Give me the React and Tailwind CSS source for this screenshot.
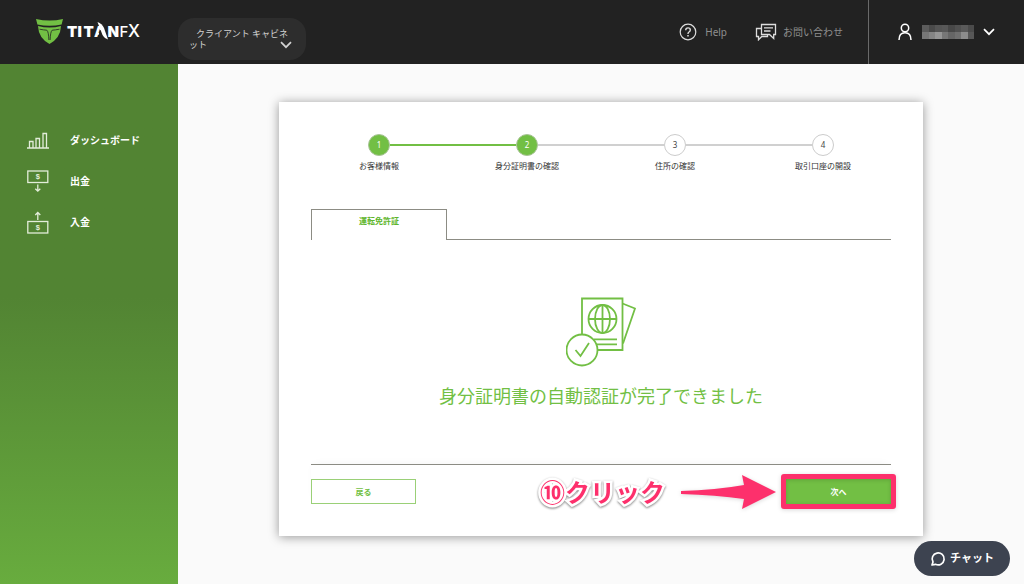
import React from "react";

function Logo() {
  return (
    <svg viewBox="0 0 108 28" className="h-7 w-27" role="img" aria-label="TITANFX">
      <path d="M0 1 Q13.500 4 27 1 L25.600 6.500 Q13.500 9 1.400 6.500 Z" fill="#72bf44" />
      <path d="M2 8 Q13.500 11 25 8 Q24.500 20 13.500 26 Q2.500 20 2 8 Z" fill="#72bf44" />
      <path d="M3.500 11.200 Q8 12 10.800 12.200 Q12.600 13.500 12.900 22 M23.500 11.200 Q19 12 16.200 12.200 Q14.400 13.500 14.100 22" fill="none" stroke="#222" strokeWidth="0.8" />
      <g fill="#fff" fontFamily="Inter, 'Liberation Sans', sans-serif" fontSize="15">
        <text x="31" y="18.500" fontWeight="900">T</text>
        <text x="41.500" y="18.500" fontWeight="900">I</text>
        <text x="47.500" y="18.500" fontWeight="900">T</text>
        <text x="58" y="18.500" fontWeight="800">A</text>
        <text x="71.500" y="18.500" fontWeight="900">N</text>
        <text x="83.500" y="18.500" fontWeight="500">F</text>
        <text x="92" y="18.500" fontWeight="500" fontSize="17">X</text>
      </g>
      <path d="M62 19 L64 12 L66 12 L68 19 L72 19 L72 20 L62 20 Z" fill="#222" />
      <path d="M61.500 4 Q66 5.500 68 10 L72 21.500 Q68 20 66.500 17 Z" fill="#fff" />
    </svg>
  );
}

function Chevron({ className }) {
  return (
    <svg viewBox="0 0 12 8" className={className} fill="none" stroke="currentColor" strokeWidth="1.7" aria-hidden="true">
      <path d="M1 1.200 L6 6.200 L11 1.200" />
    </svg>
  );
}

const mosaic = [
  "bg-[#5c5c5c]", "bg-[#4a4a4a]", "bg-[#555555]", "bg-[#585858]", "bg-[#484848]", "bg-[#515151]", "bg-[#5a5a5a]", "bg-[#4b4b4b]",
  "bg-[#777777]", "bg-[#858585]", "bg-[#969696]", "bg-[#777777]", "bg-[#666666]", "bg-[#707070]", "bg-[#8c8c8c]", "bg-[#575757]",
];

function Header() {
  return (
    <header className="flex h-16 items-stretch bg-[#222222] text-white">
      <div className="flex w-[178px] shrink-0 items-start pt-[18px] pl-9">
        <a href="#home"><Logo /></a>
      </div>
      <button type="button" className="relative mt-[18px] h-[42px] w-32 shrink-0 rounded-2xl bg-[#2d2d2d] pr-3 pl-[11px] text-left indent-[7px] text-[9px] leading-[11px] text-[#d2d2d2]">
        クライアント キャビネット
        <Chevron className="absolute right-[14px] bottom-[11px] h-2 w-3" />
      </button>
      <nav className="ml-auto flex items-center gap-7 pr-[25px] text-[10px] text-[#8e8e8e]">
        <a href="#help" className="flex items-center gap-2">
          <svg viewBox="0 0 18 18" className="size-[18px] text-[#dddddd]" fill="none" stroke="currentColor" strokeWidth="1.200" aria-hidden="true">
            <circle cx="9" cy="9" r="7.800" />
            <path d="M6.700 7.200 Q6.700 4.900 9 4.900 Q11.300 4.900 11.300 7 Q11.300 8.300 10 9 Q9 9.600 9 10.900" strokeWidth="1.400" />
            <path d="M9 12 V13.600" strokeWidth="1.500" />
          </svg>
          Help
        </a>
        <a href="#contact" className="flex items-center gap-[6px]">
          <svg viewBox="0 0 22 18" className="h-[18px] w-[22px] text-[#dddddd]" fill="none" stroke="currentColor" strokeWidth="1.300" aria-hidden="true">
            <path d="M6.500 1.500 H20.500 V11.500 H18.700 V15.500 L14.500 11.500 H6.500 Z" />
            <path d="M6.500 5.500 H1.500 V13.500 H3.500 V16.800 L6.800 13.500 H12.500 V11.500 M9 4.800 H18 M9 8 H15.500" />
          </svg>
          お問い合わせ
        </a>
      </nav>
      <button type="button" aria-label="アカウント" className="flex w-[156px] items-center border-l border-[#6a6a6a] pl-[29px] text-white">
        <svg viewBox="0 0 14 18" className="mr-[10px] h-[18px] w-[14px]" fill="none" stroke="currentColor" strokeWidth="1.500" aria-hidden="true">
          <circle cx="7" cy="5" r="3.700" />
          <path d="M1 17 Q1 9.800 7 9.800 Q13 9.800 13 17" />
        </svg>
        <span className="grid h-[14px] w-[52px] grid-cols-8 grid-rows-2">
          {mosaic.map((c, i) => <span key={i} className={c} />)}
        </span>
        <Chevron className="ml-[9px] h-2 w-3" />
      </button>
    </header>
  );
}

function Bill({ y }) {
  return (
    <>
      <rect x="0.800" y={y} width="20" height="11.500" />
      <text x="10.800" y={y + 8.400} fill="currentColor" stroke="none" textAnchor="middle" fontSize="7.500" fontWeight="700" fontFamily="Liberation Sans, sans-serif">$</text>
    </>
  );
}

const menu = [
  {
    label: "ダッシュボード",
    icon: <path d="M0 19 H22 M2.500 19 V12.500 H6 V19 M9 19 V9.500 H12.500 V19 M16 19 V4.500 H19.500 V19" />,
  },
  { label: "出金", icon: <><Bill y={1} /><path d="M10.800 14.500 V21 M8.300 18.700 L10.800 21.200 L13.300 18.700" /></> },
  { label: "入金", icon: <><Bill y={10.500} /><path d="M10.800 9 V1.500 M8.300 4 L10.800 1.500 L13.300 4" /></> },
];

function Sidebar() {
  return (
    <aside className="w-[178px] shrink-0 bg-linear-to-b from-[#528433] from-45% to-[#68ac3e] pt-14">
      <ul>
        {menu.map((m) => (
          <li key={m.label}>
            <a href="#menu" className="flex h-[41px] items-center gap-[21px] pl-[27px] text-[10px] font-bold text-white">
              <svg viewBox="0 0 22 23" className="h-[23px] w-[22px] text-[#e3edda]" fill="none" stroke="currentColor" strokeWidth="1.300" aria-hidden="true">{m.icon}</svg>
              {m.label}
            </a>
          </li>
        ))}
      </ul>
    </aside>
  );
}

const steps = [
  { label: "お客様情報", done: true, line: "h-[2px] bg-[#72bf44]" },
  { label: "身分証明書の確認", done: true, line: "h-[2px] bg-[#d0d0d0]" },
  { label: "住所の確認", done: false, line: "h-[2px] bg-[#d0d0d0]" },
  { label: "取引口座の開設", done: false, line: "" },
];

function Stepper() {
  return (
    <ol className="mx-auto grid max-w-[592px] grid-cols-4">
      {steps.map((s, i) => (
        <li key={s.label} className="text-center">
          <div className="flex items-center">
            <span className={"flex-1 " + (i ? steps[i - 1].line : "")} />
            <span className={"flex size-[22px] items-center justify-center rounded-full border text-[8px] " + (s.done ? "border-[#a9c497] bg-[#72bf44] text-white" : "border-[#cccccc] bg-white text-[#444444]")}>{i + 1}</span>
            <span className={"flex-1 " + s.line} />
          </div>
          <div className="mt-1 text-[8px] leading-3 whitespace-nowrap text-[#333333]">{s.label}</div>
        </li>
      ))}
    </ol>
  );
}

function PassportIcon() {
  return (
    <svg viewBox="0 0 70 70" className="h-[70px] w-[70px]" fill="none" stroke="#72bf44" strokeWidth="1.800" aria-hidden="true">
      <path d="M16 37.500 V1.500 H56.500 V53 H31" />
      <path d="M56.500 6.500 L69 11.500 L57 46.500" />
      <circle cx="36.500" cy="22" r="14" />
      <ellipse cx="36.500" cy="22" rx="7.500" ry="14" />
      <path d="M36.500 8 V36 M22.500 22 H50.500 M28 42.300 H51 M31 47.300 H51" />
      <circle cx="16" cy="53" r="15.500" />
      <path d="M9.500 53 L14.500 59 L23 46" />
    </svg>
  );
}

export default function App() {
  return (
    <div className="flex min-h-screen flex-col bg-[#fafafa] font-['Noto_Sans','Noto_Sans_CJK_JP',sans-serif]">
      <Header />
      <div className="flex flex-1">
        <Sidebar />
        <main className="flex-1 pt-[38px] pb-12">
          <section className="mx-auto max-w-[644px] bg-white py-8 shadow-[0_1px_10px_rgba(0,0,0,0.4)]">
            <Stepper />
            <div className="mx-8">
              <div role="tablist" className="mt-[37px] flex h-[31px]">
                <button type="button" role="tab" aria-selected="true" className="w-[136px] border border-b-0 border-[#8c8c84] pb-2 text-[8px] font-bold text-[#5eb52b]">運転免許証</button>
                <div className="flex-1 border-b border-[#8c8c84]" />
              </div>
              <div className="flex flex-col items-center pt-[57px] pb-[55px]">
                <PassportIcon />
                <h1 className="mt-4 text-center text-[18px] leading-[26px] text-[#72bf44]">身分証明書の自動認証が完了できました</h1>
              </div>
              <div className="flex items-start justify-between border-t border-[#8c8c84] pt-[14px] shadow-[0_-3px_10px_-4px_rgba(0,0,0,0.06)]">
                <button type="button" className="h-[25px] w-[105px] border border-[#9ad077] text-[8px] font-bold text-[#72bf44]">戻る</button>
                <div className="relative flex">
                  <button type="button" className="h-[25px] w-[105px] bg-[#72bf44] text-[8px] font-bold text-white">次へ</button>
                  <div className="pointer-events-none absolute -inset-[5px] rounded-[3px] border-5 border-[#fd306c] drop-shadow-sm" />
                  <div className="pointer-events-none absolute top-1/2 right-[115px] flex -translate-y-1/2 items-center gap-4">
                    <span className="text-[25px] leading-9 font-bold whitespace-nowrap text-[#fd306c] [filter:drop-shadow(0_1px_1px_rgba(0,0,0,0.5))] [paint-order:stroke_fill] [-webkit-text-stroke:5px_white]">
                      ⑩クリック
                    </span>
                    <svg viewBox="0 0 95 34" className="h-[34px] w-[95px] drop-shadow-sm" aria-hidden="true">
                      <path d="M0 16 Q35 15 63 10 L61 0 L95 17 L61 34 L63 24 Q35 20 0 19 Z" fill="#fd306c" />
                    </svg>
                  </div>
                </div>
              </div>
            </div>
          </section>
        </main>
      </div>
      <button type="button" className="fixed right-[14px] bottom-2 flex h-[35px] w-24 items-center justify-center gap-1 rounded-full bg-[#3d4350] text-[11px] font-bold text-white">
        <svg viewBox="0 0 16 16" className="size-4" fill="none" stroke="currentColor" strokeWidth="1.700" aria-hidden="true">
          <path d="M2 14 L3 11 A6 6 0 1 1 5.500 13.300 Z" strokeLinejoin="round" />
        </svg>
        チャット
      </button>
    </div>
  );
}
